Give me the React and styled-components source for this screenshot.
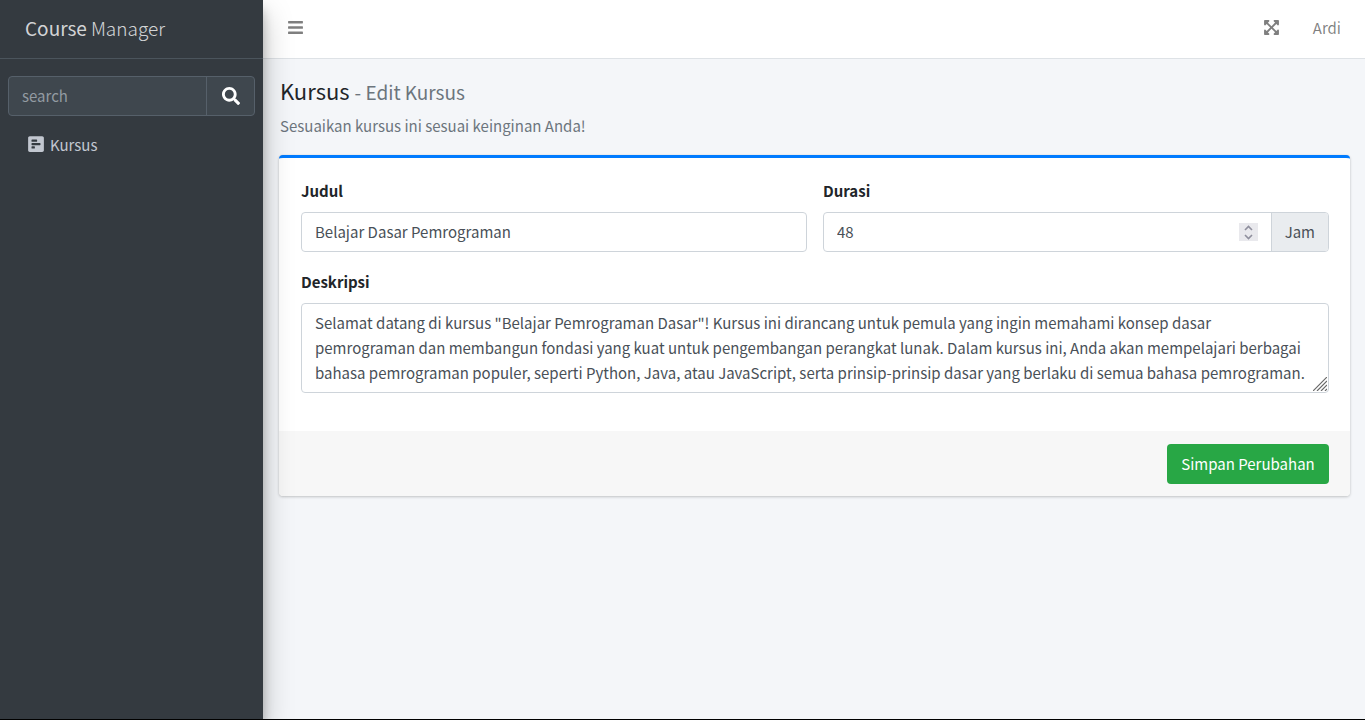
import React, { useState } from "react";
import styled, { createGlobalStyle } from "styled-components";
import { FaBars, FaExpandArrowsAlt, FaPollH, FaSearch } from "react-icons/fa";

const GlobalStyle = createGlobalStyle`
  *, *::before, *::after { box-sizing: border-box; }
  body {
    margin: 0;
    background: #f4f6f9;
    color: #212529;
    font-family: "Noto Sans CJK JP", "Noto Sans", sans-serif;
    font-size: 15px;
    line-height: 25px;
  }
  button, input, textarea { font: inherit; }
`;

const Page = styled.div`
  display: flex;
  min-height: 100vh;
  border-bottom: 1px solid #000;
  overflow: hidden;
`;

const Sidebar = styled.aside`
  position: relative;
  z-index: 1;
  flex: 0 0 263px;
  background: #343a40;
  color: #c2c7d0;
  box-shadow: 0 14px 28px rgba(0, 0, 0, 0.25), 0 10px 10px rgba(0, 0, 0, 0.22);
`;

const Brand = styled.a`
  display: flex;
  align-items: center;
  gap: 4px;
  height: 59px;
  padding: 0 25px 4px;
  border-bottom: 1px solid #4b545c;
  color: rgba(255, 255, 255, 0.8);
  font-size: 19px;
  font-weight: 300;
  text-decoration: none;
`;

const BrandStrong = styled.b`
  font-weight: 400;
`;

const Search = styled.form`
  display: flex;
  height: 40px;
  margin: 17px 8px 0;
  overflow: hidden;
  border: 1px solid #56606a;
  border-radius: 4px;
  background: #3f474e;
`;

const SearchInput = styled.input`
  flex: 1;
  min-width: 0;
  padding: 0 13px 2px;
  border: 0;
  background: transparent;
  color: #fff;
  outline: none;
  &::placeholder { color: #939ba2; opacity: 1; }
`;

const SearchButton = styled.button`
  display: flex;
  align-items: center;
  justify-content: center;
  width: 48px;
  padding: 0;
  border: 0;
  border-left: 1px solid #56606a;
  background: transparent;
  color: #fff;
  font-size: 18px;
`;

const Menu = styled.nav`
  padding: 8px;
`;

const MenuLink = styled.a`
  display: flex;
  align-items: center;
  gap: 5px;
  height: 40px;
  padding: 0 19px;
  color: #c2c7d0;
  text-decoration: none;
  svg { font-size: 18px; }
`;

const Main = styled.div`
  flex: 1;
  min-width: 0;
`;

const Topbar = styled.header`
  display: flex;
  align-items: center;
  gap: 33px;
  height: 59px;
  padding: 0 24px 4px;
  border-bottom: 1px solid #dee2e6;
  background: #fff;
`;

const IconButton = styled.button`
  display: flex;
  padding: 0;
  border: 0;
  margin-right: ${(p) => (p.$push ? "auto" : "0")};
  background: transparent;
  color: rgba(0, 0, 0, 0.5);
  font-size: 17px;
`;

const UserLink = styled.a`
  color: rgba(0, 0, 0, 0.5);
  text-decoration: none;
`;

const Content = styled.main`
  padding: 16px 15px 16px 16px;
`;

const Title = styled.h1`
  margin: 0;
  padding-left: 1px;
  font-size: 22px;
  font-weight: 400;
  line-height: 30px;
`;

const Subtitle = styled.small`
  color: #6c757d;
  font-size: 19px;
`;

const Lead = styled.p`
  margin: 6px 0 17px;
  padding-left: 1px;
  color: #6c757d;
`;

const Card = styled.form`
  overflow: hidden;
  border-top: 3px solid #007bff;
  border-radius: 4px;
  background: #fff;
  box-shadow: 0 0 1px rgba(0, 0, 0, 0.13), 0 1px 3px rgba(0, 0, 0, 0.2);
`;

const CardBody = styled.div`
  display: grid;
  grid-template-columns: 1fr 1fr;
  gap: 17px 16px;
  padding: 20px 21px 38px 22px;
`;

const Field = styled.div`
  display: flex;
  flex-direction: column;
  gap: 9px;
  min-width: 0;
  grid-column: ${(p) => (p.$wide ? "1 / -1" : "auto")};
`;

const Label = styled.label`
  font-weight: 700;
`;

const InputBox = styled.div`
  position: relative;
  display: flex;
  height: ${(p) => (p.$tall ? 90 : 40)}px;
  overflow: hidden;
  border: 1px solid #ced4da;
  border-radius: 4px;
  background: #fff;
`;

const Input = styled.input`
  flex: 1;
  min-width: 0;
  padding: 0 13px 2px;
  border: 0;
  background: transparent;
  color: #495057;
  outline: none;
  appearance: textfield;
  &::-webkit-inner-spin-button { appearance: none; margin: 0; }
`;

const Textarea = styled.textarea`
  flex: 1;
  min-width: 0;
  padding: 6px 18px 6px 13px;
  border: 0;
  background: transparent;
  color: #495057;
  outline: none;
  overflow: hidden;
  resize: none;
`;

const Grip = styled.svg`
  position: absolute;
  right: 1px;
  bottom: 1px;
`;

const Stepper = styled.div`
  display: flex;
  flex-direction: column;
  align-self: center;
  width: 19px;
  height: 18px;
  margin-right: 13px;
  background: #e9e9ed;
`;

const StepButton = styled.button`
  display: flex;
  flex: 1;
  align-items: center;
  justify-content: center;
  padding: 0;
  border: 0;
  background: transparent;
  color: #8f8f9d;
`;

const Unit = styled.span`
  display: flex;
  align-items: center;
  padding: 0 13px 2px;
  border-left: 1px solid #ced4da;
  background: #e9ecef;
  color: #495057;
`;

const CardFooter = styled.footer`
  display: flex;
  justify-content: flex-end;
  padding: 13px 21px 12px;
  background: #f7f7f7;
`;

const SaveButton = styled.button`
  min-width: 162px;
  height: 40px;
  padding: 0 13px 2px;
  border: 0;
  border-radius: 4px;
  background: #28a745;
  color: #fff;
`;

const description =
  'Selamat datang di kursus "Belajar Pemrograman Dasar"! Kursus ini dirancang untuk pemula yang ingin memahami konsep dasar pemrograman dan membangun fondasi yang kuat untuk pengembangan perangkat lunak. Dalam kursus ini, Anda akan mempelajari berbagai bahasa pemrograman populer, seperti Python, Java, atau JavaScript, serta prinsip-prinsip dasar yang berlaku di semua bahasa pemrograman.';

function Chevron({ d }) {
  return (
    <svg width="9" height="6" viewBox="0 0 9 6" fill="none" stroke="currentColor" strokeWidth="1.6">
      <path d={d} />
    </svg>
  );
}

export default function App() {
  const [hours, setHours] = useState(48);
  return (
    <>
      <GlobalStyle />
      <Page>
        <Sidebar>
          <Brand href="#">
            <BrandStrong>Course</BrandStrong>
            <span>Manager</span>
          </Brand>
          <Search onSubmit={(e) => e.preventDefault()}>
            <SearchInput type="search" placeholder="search" aria-label="search" />
            <SearchButton aria-label="Cari">
              <FaSearch />
            </SearchButton>
          </Search>
          <Menu>
            <MenuLink href="#">
              <FaPollH />
              Kursus
            </MenuLink>
          </Menu>
        </Sidebar>
        <Main>
          <Topbar>
            <IconButton type="button" aria-label="Menu" $push>
              <FaBars />
            </IconButton>
            <IconButton type="button" aria-label="Layar penuh">
              <FaExpandArrowsAlt />
            </IconButton>
            <UserLink href="#">Ardi</UserLink>
          </Topbar>
          <Content>
            <Title>
              Kursus <Subtitle>- Edit Kursus</Subtitle>
            </Title>
            <Lead>Sesuaikan kursus ini sesuai keinginan Anda!</Lead>
            <Card onSubmit={(e) => e.preventDefault()}>
              <CardBody>
                <Field>
                  <Label htmlFor="judul">Judul</Label>
                  <InputBox>
                    <Input id="judul" type="text" defaultValue="Belajar Dasar Pemrograman" />
                  </InputBox>
                </Field>
                <Field>
                  <Label htmlFor="durasi">Durasi</Label>
                  <InputBox>
                    <Input
                      id="durasi"
                      type="number"
                      value={hours}
                      onChange={(e) => setHours(Number(e.target.value))}
                    />
                    <Stepper>
                      <StepButton type="button" aria-label="Tambah" onClick={() => setHours(hours + 1)}>
                        <Chevron d="M1 5 4.500 1.500 8 5" />
                      </StepButton>
                      <StepButton type="button" aria-label="Kurangi" onClick={() => setHours(hours - 1)}>
                        <Chevron d="M1 1 4.500 4.500 8 1" />
                      </StepButton>
                    </Stepper>
                    <Unit>Jam</Unit>
                  </InputBox>
                </Field>
                <Field $wide>
                  <Label htmlFor="deskripsi">Deskripsi</Label>
                  <InputBox $tall>
                    <Textarea id="deskripsi" defaultValue={description} />
                    <Grip width="14" height="14" viewBox="0 0 14 14" stroke="#6b6b6b" strokeWidth="1.2">
                      <path d="M0 14 14 0M4 14 14 4M8 14 14 8M12 14 14 12" />
                    </Grip>
                  </InputBox>
                </Field>
              </CardBody>
              <CardFooter>
                <SaveButton type="submit">Simpan Perubahan</SaveButton>
              </CardFooter>
            </Card>
          </Content>
        </Main>
      </Page>
    </>
  );
}
